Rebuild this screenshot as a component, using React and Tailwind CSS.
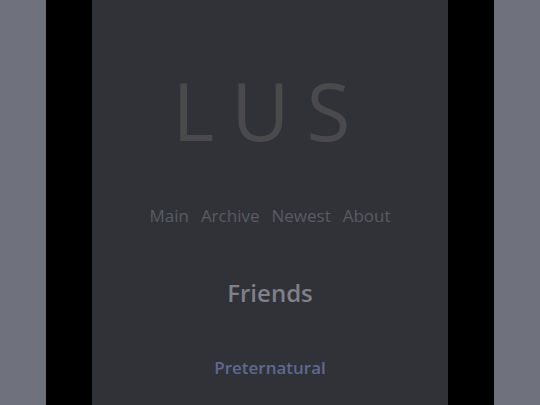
export default function App() {
  return (
    <div className="w-[540px] h-[405px] overflow-hidden bg-[#6f717c] flex justify-center" style={{ fontFamily: '"Open Sans", sans-serif' }}>
      <div className="w-[448px] h-full bg-black px-[46px]">
        <div className="h-full bg-[#313238] flex flex-col items-center">
          <div className="mt-[64px] text-[80px] leading-[92px] font-normal text-[#4a4a4c] tracking-[17px]">LUS</div>
          <nav className="mt-[48px] flex gap-[12px] text-[17px] leading-[24px] font-normal text-[#5a5b63]">
            <span>Main</span>
            <span>Archive</span>
            <span>Newest</span>
            <span>About</span>
          </nav>
          <h2 className="mt-[49px] text-[24px] leading-[32px] font-semibold text-[#7f8089]">Friends</h2>
          <div className="mt-[46px] text-[17px] leading-[26px] font-semibold text-[#5f6990]">Preternatural</div>
        </div>
      </div>
    </div>
  );
}
